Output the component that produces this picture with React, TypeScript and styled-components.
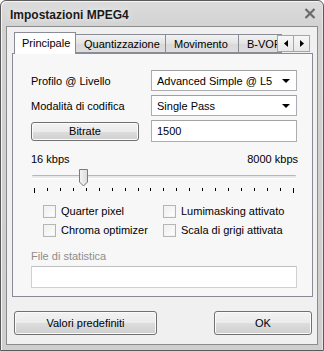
import React from "react";
import styled, { createGlobalStyle } from "styled-components";

const Global = createGlobalStyle`
  html, body { margin: 0; padding: 0; background: #ffffff; }
  body { font-family: "Liberation Sans", Arial, sans-serif; font-size: 11px; color: #000; }
  * { box-sizing: border-box; }
`;

const Window = styled.div`
  width: 324px;
  height: 351px;
  border: 1px solid #5a5a5a;
  border-radius: 6px 6px 0 0;
  background: linear-gradient(to bottom, #dcdcdc 0px, #d2d2d2 26px, #cfcfcf 100%);
  display: flex;
  flex-direction: column;
  box-shadow: inset 1px 1px 0 #f4f4f4, inset -1px 0 0 #e6e6e6;
`;

const TitleBar = styled.div`
  height: 25px;
  display: flex;
  align-items: center;
  justify-content: space-between;
  padding: 0 7px 0 9px;
`;

const Title = styled.div`
  font-weight: bold;
  font-size: 12px;
  color: #1a1a1a;
  text-shadow: 0 0 6px rgba(255,255,255,0.9);
  padding-top: 2px;
`;

const Client = styled.div`
  flex: 1;
  margin: 0 5px 5px 5px;
  border: 1px solid #8c8c8c;
  background: #f0f0f0;
  display: flex;
  flex-direction: column;
  padding: 5px 0 0 5px;
`;

const TabRow = styled.div`
  display: flex;
  align-items: flex-end;
  height: 21px;
  padding-left: 2px;
  margin-right: 4px;
  position: relative;
  z-index: 1;
`;

const Tab = styled.div<{ $active?: boolean; $w: number }>`
  width: ${(p) => p.$w}px;
  height: ${(p) => (p.$active ? 22 : 19)}px;
  margin-bottom: ${(p) => (p.$active ? -1 : 0)}px;
  margin-left: ${(p) => (p.$active ? 0 : -1)}px;
  border: 1px solid #898c95;
  border-bottom: ${(p) => (p.$active ? "none" : "1px solid #898c95")};
  background: ${(p) => (p.$active ? "#ffffff" : "linear-gradient(to bottom, #f2f2f2, #e3e3e3 50%, #d9d9d9 50%, #dddddd)")};
  display: flex;
  align-items: center;
  padding-left: ${(p) => (p.$active ? 7 : 8)}px;
  white-space: nowrap;
  overflow: hidden;
  font-size: 11px;
  padding-bottom: ${(p) => (p.$active ? 1 : 0)}px;
`;

const Arrows = styled.div`
  position: absolute;
  right: 3px;
  bottom: 1px;
  display: flex;
`;

const ArrowBtn = styled.div`
  width: 17px;
  height: 17px;
  margin-left: -1px;
  border: 1px solid #a6a6a6;
  background: linear-gradient(to bottom, #f7f7f7, #e8e8e8);
  display: flex;
  align-items: center;
  justify-content: center;
`;

const Panel = styled.div`
  height: 244px;
  margin-right: 4px;
  border: 1px solid #898c95;
  background: #f7f7f7;
  padding: 16px 14px 0 18px;
  display: flex;
  flex-direction: column;
`;

const FormRow = styled.div`
  display: grid;
  grid-template-columns: 120px 146px;
  align-items: center;
  height: 21px;
  margin-bottom: 4px;
`;

const Label = styled.div<{ $muted?: boolean }>`
  font-size: 11px;
  color: ${(p) => (p.$muted ? "#8d8d8d" : "#000")};
`;

const Combo = styled.div`
  height: 21px;
  border: 1px solid #abadb3;
  border-top-color: #a0a0a0;
  background: #fff;
  display: flex;
  align-items: center;
  justify-content: space-between;
  padding: 0 6px 0 5px;
  font-size: 11px;
`;

const Caret = styled.span`
  width: 0;
  height: 0;
  border-left: 4px solid transparent;
  border-right: 4px solid transparent;
  border-top: 4px solid #000;
  margin-top: 1px;
`;

const Button = styled.div<{ $w: number; $h: number }>`
  width: ${(p) => p.$w}px;
  height: ${(p) => p.$h}px;
  border: 1px solid #707070;
  border-radius: 3px;
  background: linear-gradient(to bottom, #f2f2f2 0%, #ebebeb 50%, #dddddd 50%, #cfcfcf 100%);
  box-shadow: inset 0 0 0 1px #fbfbfb;
  display: flex;
  align-items: center;
  justify-content: center;
  font-size: 11px;
`;

const TextInput = styled.div<{ $w: number }>`
  width: ${(p) => p.$w}px;
  height: 22px;
  border: 1px solid #abadb3;
  border-top-color: #a3a3a3;
  background: #fff;
  display: flex;
  align-items: center;
  padding-left: 5px;
  font-size: 11px;
`;

const RangeLabels = styled.div`
  display: flex;
  justify-content: space-between;
  width: 267px;
  margin-top: 8px;
  font-size: 11px;
`;

const SliderWrap = styled.div`
  width: 266px;
  height: 18px;
  position: relative;
  margin-top: 4px;
`;

const Track = styled.div`
  position: absolute;
  left: 1px;
  right: 1px;
  top: 6px;
  height: 4px;
  border-top: 1px solid #b7b7b7;
  border-bottom: 1px solid #ffffff;
  background: #e7eaea;
  border-radius: 1px;
`;

const Thumb = styled.svg`
  position: absolute;
  left: 47px;
  top: 0px;
`;

const Ticks = styled.div`
  width: 266px;
  display: flex;
  justify-content: space-between;
  padding: 0 3px 0 3px;
  align-items: flex-start;
  height: 6px;
  margin-top: 1px;
`;

const TickMark = styled.div<{ $long?: boolean }>`
  width: 1px;
  height: ${(p) => (p.$long ? 5 : 3)}px;
  background: #000;
`;

const CheckGrid = styled.div`
  display: grid;
  grid-template-columns: 120px 140px;
  row-gap: 5px;
  margin-top: 10px;
  padding-left: 12px;
`;

const CheckItem = styled.div`
  display: flex;
  align-items: center;
  gap: 5px;
  height: 14px;
  font-size: 11px;
`;

const Box = styled.span`
  width: 13px;
  height: 13px;
  border: 1px solid #b5b5b5;
  background: linear-gradient(135deg, #eeeeee, #ffffff);
  box-shadow: inset 0 0 0 1px #f4f4f4;
`;

const StatsLabel = styled(Label)`
  margin-top: 13px;
`;

const StatsInput = styled(TextInput)`
  margin-top: 4px;
  border-color: #d0d0d0;
  border-top-color: #c0c0c0;
`;

const Footer = styled.div`
  display: flex;
  justify-content: space-between;
  padding: 14px 5px 0 2px;
`;

const ticks = Array.from({ length: 21 }, (_, i) => i);

export default function App() {
  return (
    <>
      <Global />
      <Window>
        <TitleBar>
          <Title>Impostazioni MPEG4</Title>
          <svg width="12" height="11" viewBox="0 0 12 11">
            <path d="M1.5 1 L10.5 10 M10.5 1 L1.5 10" stroke="#6b6b6b" strokeWidth="2.2" />
          </svg>
        </TitleBar>
        <Client>
          <TabRow>
            <Tab $active $w={62}>Principale</Tab>
            <Tab $w={91}>Quantizzazione</Tab>
            <Tab $w={74}>Movimento</Tab>
            <Tab $w={44}>B-VOP</Tab>
            <Arrows>
              <ArrowBtn>
                <svg width="4" height="7" viewBox="0 0 4 7"><path d="M4 0 L0 3.5 L4 7 Z" fill="#000" /></svg>
              </ArrowBtn>
              <ArrowBtn>
                <svg width="4" height="7" viewBox="0 0 4 7"><path d="M0 0 L4 3.5 L0 7 Z" fill="#000" /></svg>
              </ArrowBtn>
            </Arrows>
          </TabRow>
          <Panel>
            <FormRow>
              <Label>Profilo @ Livello</Label>
              <Combo>Advanced Simple @ L5<Caret /></Combo>
            </FormRow>
            <FormRow>
              <Label>Modalità di codifica</Label>
              <Combo>Single Pass<Caret /></Combo>
            </FormRow>
            <FormRow>
              <Button $w={108} $h={19}>Bitrate</Button>
              <TextInput $w={146}>1500</TextInput>
            </FormRow>
            <RangeLabels>
              <span>16 kbps</span>
              <span>8000 kbps</span>
            </RangeLabels>
            <SliderWrap>
              <Track />
              <Thumb width="11" height="18" viewBox="0 0 11 18">
                <defs>
                  <linearGradient id="tg" x1="0" y1="0" x2="1" y2="0">
                    <stop offset="0" stopColor="#f4f4f4" />
                    <stop offset="1" stopColor="#dcdcdc" />
                  </linearGradient>
                </defs>
                <path d="M1.5 0.5 H9.5 V13 L5.5 17 L1.5 13 Z" fill="url(#tg)" stroke="#7a7a7a" strokeWidth="1" />
              </Thumb>
            </SliderWrap>
            <Ticks>
              {ticks.map((i) => (
                <TickMark key={i} $long={i === 0 || i === 20} />
              ))}
            </Ticks>
            <CheckGrid>
              <CheckItem><Box />Quarter pixel</CheckItem>
              <CheckItem><Box />Lumimasking attivato</CheckItem>
              <CheckItem><Box />Chroma optimizer</CheckItem>
              <CheckItem><Box />Scala di grigi attivata</CheckItem>
            </CheckGrid>
            <StatsLabel $muted>File di statistica</StatsLabel>
            <StatsInput $w={266} />
          </Panel>
          <Footer>
            <Button $w={143} $h={24}>Valori predefiniti</Button>
            <Button $w={98} $h={24}>OK</Button>
          </Footer>
        </Client>
      </Window>
    </>
  );
}
